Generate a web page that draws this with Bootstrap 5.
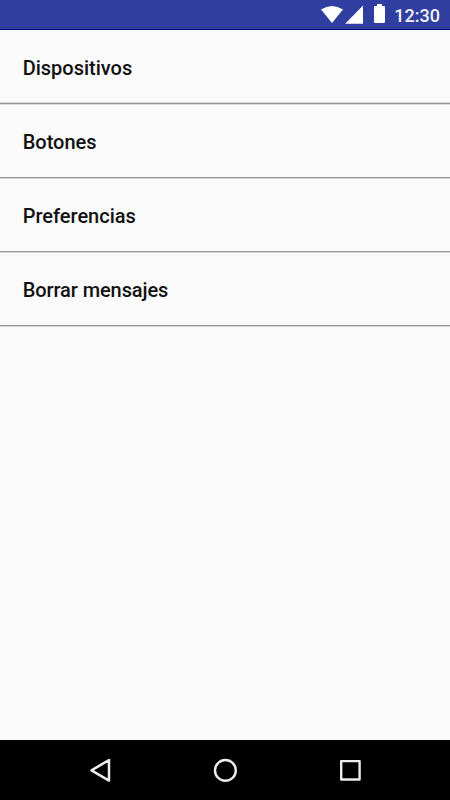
<!DOCTYPE html>
<html lang="es">
<head>
<meta charset="utf-8">
<meta name="viewport" content="width=device-width, initial-scale=1">
<title>Menú</title>
<link href="https://cdn.jsdelivr.net/npm/bootstrap@5.3.0/dist/css/bootstrap.min.css" rel="stylesheet">
<style>
body { font-family: Roboto, "Liberation Sans", sans-serif; background: #fafafa; }
.status-bar { height: 30px; background: #303f9f; border-bottom: 1px solid #00007f; padding-right: 10px; }
.clock { width: 46px; font-size: 18px; line-height: 29px; font-weight: 500; color: #f1f2f9; margin-left: 8px; padding-top: 1px; text-align: right; }
.menu-list .list-group-item { height: 74px; padding: 2px 22.7px 0; background: #fafafa; color: #111; font-size: 20px; font-weight: 500; letter-spacing: -.01px; border-color: #979797; box-shadow: inset 0 1px 0 #d8d8d8; }
.menu-list .list-group-item:first-child { box-shadow: inset 0 -1px 0 #d8d8d8; }
.menu-list .list-group-item:last-child { border-bottom: 1px solid #979797; letter-spacing: -.09px; box-shadow: inset 0 1px 0 #d8d8d8, 0 1px 0 #d8d8d8; }
.nav-keys { height: 60px; background: #000; }
.nav-keys .col { flex: 0 0 125px; }
</style>
</head>
<body class="vh-100 d-flex flex-column overflow-hidden">
<header class="status-bar d-flex justify-content-end flex-shrink-0">
  <svg width="66" height="29" viewBox="320 0 66 29" fill="#fff" aria-hidden="true">
    <path d="M321 9.4Q332 2.4 343 9.4L332 23Z"/>
    <path d="M363 5.5V23.7H345.2Z"/>
    <path d="M375 6H377V4H382V6H384Q385 6 385 7V22Q385 23 384 23H375Q374 23 374 22V7Q374 6 375 6Z"/>
  </svg>
  <span class="clock">12:30</span>
</header>
<main class="flex-grow-1">
  <div class="list-group list-group-flush menu-list">
    <a href="#" class="list-group-item d-flex align-items-center">Dispositivos</a>
    <a href="#" class="list-group-item d-flex align-items-center">Botones</a>
    <a href="#" class="list-group-item d-flex align-items-center">Preferencias</a>
    <a href="#" class="list-group-item d-flex align-items-center">Borrar mensajes</a>
  </div>
</main>
<nav class="nav-keys flex-shrink-0">
  <div class="row g-0 h-100 justify-content-center align-items-center text-center">
    <div class="col"><svg class="d-block mx-auto" width="30" height="60" viewBox="85 740 30 60" fill="none" stroke="#ececec" stroke-width="2.5" stroke-linejoin="round"><path d="M109 760V780.6L91.5 770.3Z"/></svg></div>
    <div class="col"><svg class="d-block mx-auto" width="30" height="60" viewBox="210 740 30 60" fill="none" stroke="#ececec" stroke-width="2.4"><circle cx="225.4" cy="770.4" r="10.4"/></svg></div>
    <div class="col"><svg class="d-block mx-auto" width="30" height="60" viewBox="335 740 30 60" fill="none" stroke="#ececec" stroke-width="2.4" stroke-linejoin="round"><rect x="341.2" y="761.1" width="18.4" height="18.4"/></svg></div>
  </div>
</nav>
<script src="https://cdn.jsdelivr.net/npm/bootstrap@5.3.0/dist/js/bootstrap.bundle.min.js"></script>
</body>
</html>
